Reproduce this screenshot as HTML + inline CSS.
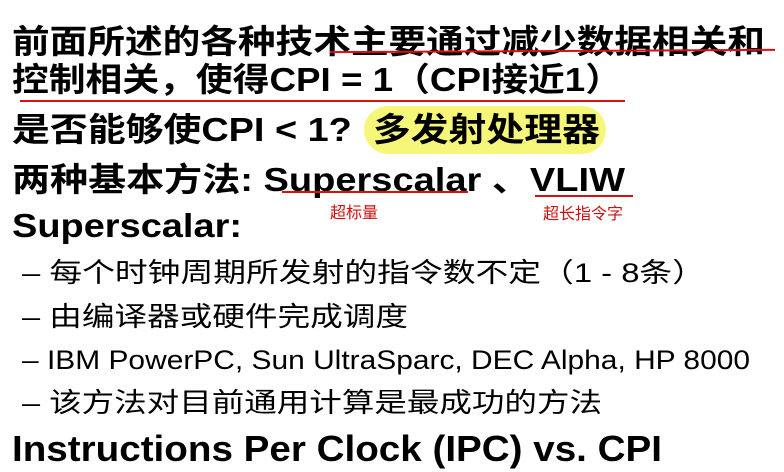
<!DOCTYPE html>
<html><head><meta charset="utf-8"><style>
html,body{margin:0;padding:0;background:#fff;width:784px;height:472px;overflow:hidden;position:relative}
.l{position:absolute;white-space:nowrap;transform-origin:0 50%;font-family:"Liberation Sans","Noto Sans CJK SC",sans-serif;color:#000;line-height:1}
.b{font-weight:bold}
.r{position:absolute;background:#d81010;height:2px}
.h{position:absolute;color:#d01010;font-family:"Noto Sans CJK SC",sans-serif;font-size:16px;white-space:nowrap;transform-origin:0 0}
</style></head><body>
<div style="position:absolute;left:364px;top:106px;width:242px;height:48px;border-radius:24px;background:#f6f77a"></div>
<div class="l b" data-w="753" style="left:12px;top:25px;font-size:33px">前面所述的各种技术主要通过减少数据相关和</div>
<div class="l b" data-w="610" style="left:12px;top:63px;font-size:33px">控制相关，使得CPI = 1（CPI接近1）</div>
<div class="l b" data-w="588" style="left:12px;top:113px;font-size:33px">是否能够使CPI &lt; 1? &nbsp;多发射处理器</div>
<div class="l b" data-w="613" style="left:12px;top:163px;font-size:33px">两种基本方法: Superscalar 、VLIW</div>
<div class="l b" data-w="230" style="left:12px;top:209px;font-size:33px">Superscalar:</div>
<div class="l" data-w="683" style="left:22px;top:260px;font-size:27px">– 每个时钟周期所发射的指令数不定（1 - 8条）</div>
<div class="l" data-w="386" style="left:22px;top:304px;font-size:27px">– 由编译器或硬件完成调度</div>
<div class="l" data-w="728" style="left:22px;top:347px;font-size:27px">– IBM PowerPC, Sun UltraSparc, DEC Alpha, HP 8000</div>
<div class="l" data-w="580" style="left:22px;top:390px;font-size:27px">– 该方法对目前通用计算是最成功的方法</div>
<div class="l b" data-w="650" style="left:12px;top:431px;font-size:36px">Instructions Per Clock (IPC) vs. CPI</div>
<div class="r" style="left:330px;top:50px;width:445px;transform:rotate(-0.3deg)"></div>
<div class="r" style="left:20px;top:100px;width:605px"></div>
<div class="r" style="left:282px;top:191px;width:186px"></div>
<div class="r" style="left:535px;top:195px;width:98px"></div>
<div class="h" style="left:330px;top:199px">超标量</div>
<div class="h" style="left:543px;top:200px">超长指令字</div>
<script>
document.querySelectorAll('.l').forEach(function(e){var w=+e.dataset.w;var a=e.getBoundingClientRect().width;if(a>0)e.style.transform='scaleX('+(w/a)+')';});
</script>
</body></html>
